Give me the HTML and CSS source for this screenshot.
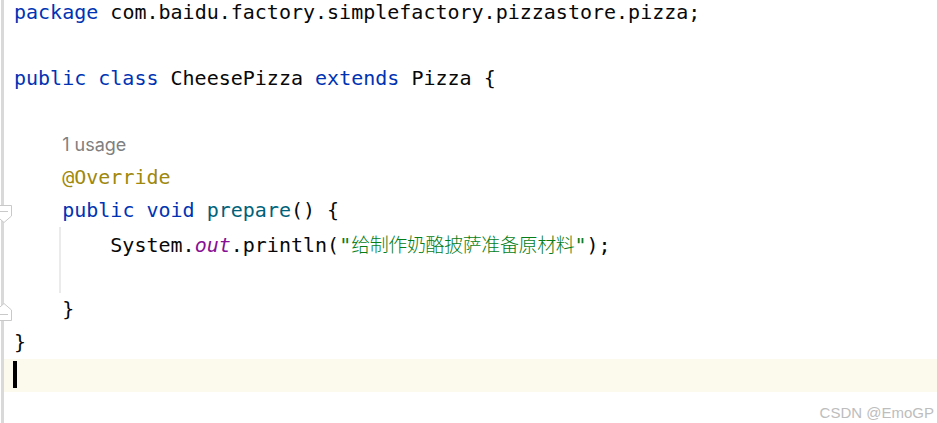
FILE: index.html
```html
<!DOCTYPE html>
<html>
<head>
<meta charset="utf-8">
<link rel="stylesheet" href="styles.css">
</head>
<body>
<div class="editor">
  <div class="gutter"></div>
  <div class="code">
    <div class="line"><span class="kw">package</span> com.baidu.factory.simplefactory.pizzastore.pizza;</div>
    <div class="line"></div>
    <div class="line"><span class="kw">public class</span> CheesePizza <span class="kw">extends</span> Pizza {</div>
    <div class="line"></div>
    <div class="line">    <span class="hint">1 usage</span></div>
    <div class="line">    <span class="ann">@Override</span></div>
    <div class="line">    <span class="kw">public void</span> <span class="fn">prepare</span>() {</div>
    <div class="line guide">        System.<span class="field">out</span>.println(<span class="str">"<span class="cjk">给制作奶酪披萨准备原材料</span>"</span>);</div>
    <div class="line guide"></div>
    <div class="line">    }</div>
    <div class="line">}</div>
    <div class="line current"><span class="caret"></span></div>
  </div>
  <svg class="fold fold-start" width="16" height="18" viewBox="0 0 16 18">
    <path d="M0.5 0.5 H15.5 V11 L8 17.5 L0.5 11 Z" fill="#fff" stroke="#c9c9c9"/>
    <path d="M4 6.5 H12" stroke="#c9c9c9"/>
  </svg>
  <svg class="fold fold-end" width="16" height="18" viewBox="0 0 16 18">
    <path d="M0.5 17.5 H15.5 V7 L8 0.5 L0.5 7 Z" fill="#fff" stroke="#c9c9c9"/>
    <path d="M4 11.5 H12" stroke="#c9c9c9"/>
  </svg>
  <div class="watermark">CSDN @EmoGP</div>
</div>
</body>
</html>
```
FILE: styles.css
```css
html, body {
  margin: 0;
  padding: 0;
  background: #ffffff;
}
.editor {
  position: relative;
  width: 937px;
  height: 423px;
  overflow: hidden;
  display: flex;
  background: #ffffff;
}
.gutter {
  width: 4px;
  flex: 0 0 4px;
  background: linear-gradient(to right, transparent 1px, #d9d9d9 1px, #d9d9d9 4px);
}
.code {
  flex: 1;
  margin-top: -4.5px;
  font-family: "DejaVu Sans Mono", "Noto Sans CJK SC", monospace;
  font-size: 20px;
  line-height: 33.07px;
  color: #080808;
}
.line {
  position: relative;
  height: 33.07px;
  padding-left: 10px;
  white-space: pre;
}
.line.current {
  background: #fcfaed;
}
.line.guide::before {
  content: "";
  position: absolute;
  left: 55px;
  top: 0;
  bottom: 0;
  width: 2px;
  background: #ebebeb;
}
.kw { color: #0033b3; }
.fn { color: #00627a; }
.ann { color: #9e880d; }
.field { color: #871094; font-style: italic; }
.str { color: #067d17; }
.cjk {
  font-family: "Noto Sans CJK SC", sans-serif;
  font-size: 19px;
  letter-spacing: -0.4px;
  font-weight: 300;
}
.hint {
  font-family: "Inter", "Noto Sans", sans-serif;
  font-size: 18px;
  color: #808080;
}
.caret {
  display: inline-block;
  width: 4px;
  height: 27px;
  margin-left: -1px;
  background: #000;
  vertical-align: -6px;
}
.fold {
  position: absolute;
  left: -4px;
}
.fold-start { top: 205px; }
.fold-end { top: 303px; }
.watermark {
  position: absolute;
  right: 3px;
  top: 404px;
  font-family: "Liberation Sans", Arial, sans-serif;
  font-size: 15px;
  line-height: 17px;
  color: #bdbdbd;
}
```
